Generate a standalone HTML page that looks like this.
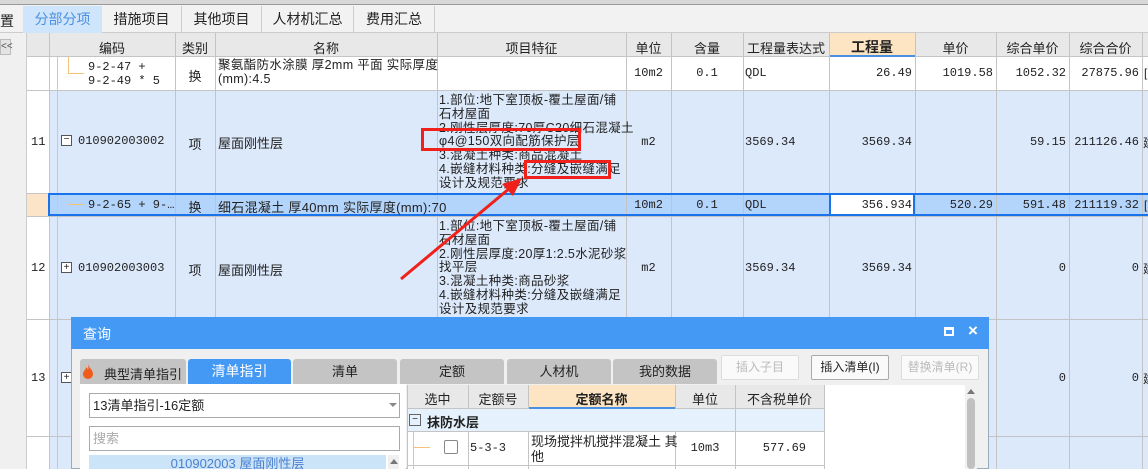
<!DOCTYPE html>
<html><head><meta charset="utf-8"><style>
*{margin:0;padding:0;box-sizing:border-box}
body{width:1148px;height:469px;overflow:hidden;position:relative;background:#fff;font-family:"Liberation Sans","Noto Sans CJK SC",sans-serif;font-size:12px;color:#222}
.a{position:absolute;white-space:nowrap}
.m{font-family:"Liberation Mono","Noto Sans CJK SC",monospace;font-size:12px}
.vl{position:absolute;width:1px;background:#c4c4c4}
.hl{position:absolute;height:1px;background:#c4c4c4}
.c{text-align:center}
.r{text-align:right}
.f{font-size:12.5px;line-height:13.8px;letter-spacing:0.35px}
</style></head><body>
<!-- top strip -->
<div class="a" style="left:0;top:0;width:1148px;height:5px;background:#d8d8d8;border-bottom:1px solid #999"></div>
<div class="a" style="left:0;top:5px;width:1148px;height:28px;background:#f2f2f2;border-bottom:1px solid #ccc"></div>
<div class="a" style="left:0;top:11px;font-size:14px">置</div>
<div class="a c" style="left:23px;top:6px;width:79px;height:27px;background:#cfe5fb;color:#4a90e2;font-size:14px;line-height:27px">分部分项</div>
<div class="a c" style="left:102px;top:6px;width:80px;height:27px;border-right:1px solid #ccc;font-size:14px;line-height:27px">措施项目</div>
<div class="a c" style="left:182px;top:6px;width:80px;height:27px;border-right:1px solid #ccc;font-size:14px;line-height:27px">其他项目</div>
<div class="a c" style="left:262px;top:6px;width:92px;height:27px;border-right:1px solid #ccc;font-size:14px;line-height:27px">人材机汇总</div>
<div class="a c" style="left:354px;top:6px;width:81px;height:27px;border-right:1px solid #ccc;font-size:14px;line-height:27px">费用汇总</div>
<!-- left gutter -->
<div class="a" style="left:0;top:33px;width:27px;height:436px;background:#f0f0f0;border-right:1px solid #ccc"></div>
<div class="a" style="left:0;top:39px;width:11px;height:16px;background:#e4e4e4;border:1px solid #bbb;font-size:10px;line-height:14px;color:#555">&lt;&lt;</div>
<!-- header -->
<div class="a" style="left:27px;top:33px;width:1121px;height:24px;background:#e8e8e8;border-bottom:1px solid #c4c4c4"></div>
<div class="a" style="left:829px;top:33px;width:86px;height:24px;background:#fde5c4;border-bottom:2px solid #4a90e2"></div>
<!-- row bgs -->
<div class="a" style="left:27px;top:57px;width:22px;height:412px;background:#fff"></div>
<div class="a" style="left:49px;top:90px;width:1099px;height:103px;background:#dce9fb"></div>
<div class="a" style="left:49px;top:216px;width:1099px;height:253px;background:#dce9fb"></div>
<div class="a" style="left:27px;top:193px;width:22px;height:23px;background:#fce4c8"></div>
<div class="a" style="left:49px;top:193px;width:1099px;height:23px;background:#b3d4fb"></div>
<div class="a" style="left:829px;top:194px;width:86px;height:21px;background:#fff"></div>
<!-- grid lines -->
<div class="vl" style="left:49px;top:33px;height:436px"></div>
<div class="vl" style="left:175px;top:33px;height:436px"></div>
<div class="vl" style="left:215px;top:33px;height:436px"></div>
<div class="vl" style="left:437px;top:33px;height:436px"></div>
<div class="vl" style="left:626px;top:33px;height:436px"></div>
<div class="vl" style="left:671px;top:33px;height:436px"></div>
<div class="vl" style="left:743px;top:33px;height:436px"></div>
<div class="vl" style="left:829px;top:33px;height:436px"></div>
<div class="vl" style="left:915px;top:33px;height:436px"></div>
<div class="vl" style="left:996px;top:33px;height:436px"></div>
<div class="vl" style="left:1069px;top:33px;height:436px"></div>
<div class="vl" style="left:1142px;top:33px;height:436px"></div>
<div class="hl" style="left:27px;top:90px;width:1121px"></div>
<div class="hl" style="left:27px;top:193px;width:1121px"></div>
<div class="hl" style="left:27px;top:216px;width:1121px"></div>
<div class="hl" style="left:27px;top:319px;width:1121px"></div>
<div class="hl" style="left:27px;top:436px;width:1121px"></div>
<!-- tree lines -->
<div class="a" style="left:57px;top:57px;width:1px;height:412px;background:#f5c27a"></div>
<div class="a" style="left:68px;top:57px;width:1px;height:16px;background:#f5c27a"></div>
<div class="a" style="left:68px;top:73px;width:16px;height:1px;background:#f5c27a"></div>
<div class="a" style="left:68px;top:204px;width:16px;height:1px;background:#f5c27a"></div>
<!-- header text -->
<div class="a c" style="left:49px;top:38px;width:126px;font-size:13px">编码</div>
<div class="a c" style="left:175px;top:38px;width:40px;font-size:13px">类别</div>
<div class="a c" style="left:215px;top:38px;width:222px;font-size:13px">名称</div>
<div class="a c" style="left:437px;top:38px;width:189px;font-size:13px">项目特征</div>
<div class="a c" style="left:626px;top:38px;width:45px;font-size:13px">单位</div>
<div class="a c" style="left:671px;top:38px;width:72px;font-size:13px">含量</div>
<div class="a c" style="left:743px;top:38px;width:86px;font-size:13px">工程量表达式</div>
<div class="a c" style="left:829px;top:37px;width:86px;font-size:14px;font-weight:bold">工程量</div>
<div class="a c" style="left:915px;top:38px;width:81px;font-size:13px">单价</div>
<div class="a c" style="left:996px;top:38px;width:73px;font-size:13px">综合单价</div>
<div class="a c" style="left:1069px;top:38px;width:73px;font-size:13px">综合合价</div>
<!-- row1 -->
<div class="a m" style="left:88px;top:60px;line-height:14px">9-2-47 +<br>9-2-49 * 5</div>
<div class="a c" style="left:175px;top:66px;width:40px;font-size:13px">换</div>
<div class="a f" style="left:218px;top:59px">聚氨酯防水涂膜 厚2mm 平面  实际厚度<br>(mm):4.5</div>
<div class="a m c" style="left:626px;top:66px;width:45px">10m2</div>
<div class="a m c" style="left:671px;top:66px;width:72px">0.1</div>
<div class="a m" style="left:745px;top:66px">QDL</div>
<div class="a m r" style="left:829px;top:66px;width:83px">26.49</div>
<div class="a m r" style="left:915px;top:66px;width:78px">1019.58</div>
<div class="a m r" style="left:996px;top:66px;width:70px">1052.32</div>
<div class="a m r" style="left:1069px;top:66px;width:70px">27875.96</div>
<div class="a" style="left:1144px;top:66px">[</div>
<!-- row11 -->
<div class="a m" style="left:31px;top:135px">11</div>
<div class="a" style="left:61px;top:135px;width:11px;height:11px;border:1px solid #555;background:#fff;font-size:10px;line-height:8px;text-align:center">−</div>
<div class="a m" style="left:78px;top:134px">010902003002</div>
<div class="a c" style="left:175px;top:134px;width:40px;font-size:13px">项</div>
<div class="a" style="left:218px;top:133px;font-size:13px">屋面刚性层</div>
<div class="a f" style="left:439px;top:94px">1.部位:地下室顶板-覆土屋面/铺<br>石材屋面<br>2.刚性层厚度:70厚C20细石混凝土<br>φ4@150双向配筋保护层<br>3.混凝土种类:商品混凝土<br>4.嵌缝材料种类:分缝及嵌缝满足<br>设计及规范要求</div>
<div class="a m c" style="left:626px;top:135px;width:45px">m2</div>
<div class="a m" style="left:745px;top:135px">3569.34</div>
<div class="a m r" style="left:829px;top:135px;width:83px">3569.34</div>
<div class="a m r" style="left:996px;top:135px;width:70px">59.15</div>
<div class="a m r" style="left:1069px;top:135px;width:70px">211126.46</div>
<div class="a" style="left:1143px;top:134px">建</div>
<!-- selected -->
<div class="a" style="left:48px;top:193px;width:1100px;height:23px;border:2px solid #1a73e8;border-right:none"></div>
<div class="a" style="left:829px;top:193px;width:86px;height:23px;border:2px solid #1a73e8"></div>
<div class="a m" style="left:88px;top:198px">9-2-65 + 9-…</div>
<div class="a c" style="left:175px;top:197px;width:40px;font-size:13px">换</div>
<div class="a" style="left:218px;top:197px;font-size:13px;letter-spacing:0.3px">细石混凝土 厚40mm  实际厚度(mm):70</div>
<div class="a m c" style="left:626px;top:198px;width:45px">10m2</div>
<div class="a m c" style="left:671px;top:198px;width:72px">0.1</div>
<div class="a m" style="left:745px;top:198px">QDL</div>
<div class="a m r" style="left:829px;top:198px;width:83px">356.934</div>
<div class="a m r" style="left:915px;top:198px;width:78px">520.29</div>
<div class="a m r" style="left:996px;top:198px;width:70px">591.48</div>
<div class="a m r" style="left:1069px;top:198px;width:70px">211119.32</div>
<div class="a" style="left:1144px;top:198px">[</div>
<!-- row12 -->
<div class="a m" style="left:31px;top:261px">12</div>
<div class="a" style="left:61px;top:262px;width:11px;height:11px;border:1px solid #555;background:#fff;font-size:10px;line-height:9px;text-align:center">+</div>
<div class="a m" style="left:78px;top:261px">010902003003</div>
<div class="a c" style="left:175px;top:260px;width:40px;font-size:13px">项</div>
<div class="a" style="left:218px;top:260px;font-size:13px">屋面刚性层</div>
<div class="a f" style="left:439px;top:220px">1.部位:地下室顶板-覆土屋面/铺<br>石材屋面<br>2.刚性层厚度:20厚1:2.5水泥砂浆<br>找平层<br>3.混凝土种类:商品砂浆<br>4.嵌缝材料种类:分缝及嵌缝满足<br>设计及规范要求</div>
<div class="a m c" style="left:626px;top:261px;width:45px">m2</div>
<div class="a m" style="left:745px;top:261px">3569.34</div>
<div class="a m r" style="left:829px;top:261px;width:83px">3569.34</div>
<div class="a m r" style="left:996px;top:261px;width:70px">0</div>
<div class="a m r" style="left:1069px;top:261px;width:70px">0</div>
<div class="a" style="left:1143px;top:260px">建</div>
<!-- row13 -->
<div class="a m" style="left:31px;top:371px">13</div>
<div class="a" style="left:61px;top:372px;width:11px;height:11px;border:1px solid #555;background:#fff;font-size:10px;line-height:9px;text-align:center">+</div>
<div class="a m r" style="left:996px;top:371px;width:70px">0</div>
<div class="a m r" style="left:1069px;top:371px;width:70px">0</div>
<div class="a" style="left:1143px;top:370px">建</div>
<!-- red annotations -->
<div class="a" style="left:421px;top:128px;width:160px;height:23px;border:3px solid #f0201a"></div>
<div class="a" style="left:524px;top:160px;width:87px;height:19px;border:3px solid #f0201a"></div>
<svg class="a" style="left:0;top:0" width="1148" height="469"><line x1="401" y1="279" x2="510" y2="188" stroke="#f0201a" stroke-width="3"/><polygon points="522,178 502,184 513,196" fill="#f0201a"/></svg>
<!-- dialog -->
<div class="a" style="left:71px;top:317px;width:918px;height:152px;background:#f0f0f0;border:1px solid #9ab"></div>
<div class="a" style="left:71px;top:317px;width:918px;height:32px;background:#4499f5"></div>
<div class="a" style="left:83px;top:324px;color:#fff;font-size:14px">查询</div>
<div class="a" style="left:944px;top:327px;width:10px;height:9px;border:2px solid #fff;border-top-width:3px"></div>
<div class="a" style="left:968px;top:321px;color:#fff;font-size:17px;font-weight:bold">×</div>
<div class="a" style="left:80px;top:359px;width:106px;height:25px;background:#c4c4c4;border-radius:3px 3px 0 0"></div>
<svg class="a" style="left:82px;top:363px" width="12" height="16"><path d="M6 1C7 5 11 7 11 11a5 5 0 0 1-10 0C1 8 4 7 4 4c1 1 2 2 2 3 1-2 0-4 0-6z" fill="#f05a1a"/></svg>
<div class="a" style="left:104px;top:364px;font-size:13px">典型清单指引</div>
<div class="a c" style="left:188px;top:359px;width:103px;height:25px;background:#4499f5;color:#fff;font-size:14px;line-height:25px;border-radius:3px 3px 0 0">清单指引</div>
<div class="a c" style="left:293px;top:359px;width:104px;height:25px;background:#c4c4c4;font-size:13px;line-height:25px;border-radius:3px 3px 0 0">清单</div>
<div class="a c" style="left:400px;top:359px;width:104px;height:25px;background:#c4c4c4;font-size:13px;line-height:25px;border-radius:3px 3px 0 0">定额</div>
<div class="a c" style="left:507px;top:359px;width:104px;height:25px;background:#c4c4c4;font-size:13px;line-height:25px;border-radius:3px 3px 0 0">人材机</div>
<div class="a c" style="left:613px;top:359px;width:104px;height:25px;background:#c4c4c4;font-size:13px;line-height:25px;border-radius:3px 3px 0 0">我的数据</div>
<div class="a c" style="left:721px;top:355px;width:78px;height:25px;background:#fafafa;border:1px solid #ddd;border-radius:2px;color:#bbb;line-height:23px">插入子目</div>
<div class="a c" style="left:811px;top:355px;width:78px;height:25px;background:#fafafa;border:1px solid #aaa;border-radius:2px;line-height:23px">插入清单(I)</div>
<div class="a c" style="left:901px;top:355px;width:78px;height:25px;background:#fafafa;border:1px solid #ddd;border-radius:2px;color:#bbb;line-height:23px">替换清单(R)</div>
<!-- left panel -->
<div class="a" style="left:80px;top:384px;width:326px;height:85px;background:#fff"></div>
<div class="a" style="left:89px;top:393px;width:311px;height:25px;border:1px solid #aaa;font-size:13px;line-height:23px;padding-left:3px">13清单指引-16定额</div>
<div class="a" style="left:389px;top:403px;width:0;height:0;border-left:4px solid transparent;border-right:4px solid transparent;border-top:4px solid #888"></div>
<div class="a" style="left:89px;top:426px;width:311px;height:25px;border:1px solid #aaa;font-size:13px;line-height:23px;padding-left:3px;color:#aaa">搜索</div>
<div class="a c" style="left:89px;top:455px;width:297px;height:14px;background:#cce4f7;color:#4a80d0;font-size:13px;line-height:18px">010902003  屋面刚性层</div>
<div class="a" style="left:388px;top:455px;width:11px;height:14px;background:#f0f0f0"></div>
<div class="a" style="left:390px;top:459px;width:0;height:0;border-left:4px solid transparent;border-right:4px solid transparent;border-bottom:5px solid #777"></div>
<!-- grid -->
<div class="a" style="left:407px;top:385px;width:570px;height:84px;background:#fff"></div>
<div class="a" style="left:407px;top:385px;width:417px;height:24px;background:#e8e8e8;border-bottom:1px solid #c4c4c4"></div>
<div class="a" style="left:528px;top:385px;width:147px;height:24px;background:#fde5c4;border-bottom:2px solid #4a90e2"></div>
<div class="a" style="left:407px;top:409px;width:417px;height:23px;background:#e5f2fd;border-bottom:1px solid #c4c4c4"></div>
<div class="vl" style="left:407px;top:385px;height:84px"></div>
<div class="vl" style="left:468px;top:385px;height:24px"></div>
<div class="vl" style="left:468px;top:432px;height:37px"></div>
<div class="vl" style="left:528px;top:385px;height:24px"></div>
<div class="vl" style="left:528px;top:432px;height:37px"></div>
<div class="vl" style="left:675px;top:385px;height:24px"></div>
<div class="vl" style="left:675px;top:432px;height:37px"></div>
<div class="vl" style="left:735px;top:385px;height:84px"></div>
<div class="vl" style="left:824px;top:385px;height:84px"></div>
<div class="hl" style="left:407px;top:465px;width:417px"></div>
<div class="a c" style="left:407px;top:389px;width:61px;font-size:13px">选中</div>
<div class="a c" style="left:468px;top:389px;width:60px;font-size:13px">定额号</div>
<div class="a c" style="left:528px;top:389px;width:147px;font-size:13px;font-weight:bold">定额名称</div>
<div class="a c" style="left:675px;top:389px;width:60px;font-size:13px">单位</div>
<div class="a c" style="left:735px;top:389px;width:89px;font-size:13px">不含税单价</div>
<div class="a" style="left:409px;top:414px;width:12px;height:12px;border:1px solid #666;font-size:10px;line-height:9px;text-align:center">−</div>
<div class="a" style="left:427px;top:412px;font-size:13px;font-weight:bold">抹防水层</div>
<div class="a" style="left:413px;top:432px;width:1px;height:37px;background:#f5c27a"></div>
<div class="a" style="left:413px;top:447px;width:17px;height:1px;background:#f5c27a"></div>
<div class="a" style="left:444px;top:440px;width:14px;height:14px;border:1px solid #888;border-radius:2px;background:#fff"></div>
<div class="a m" style="left:470px;top:441px">5-3-3</div>
<div class="a" style="left:531px;top:434px;font-size:13px;line-height:15px">现场搅拌机搅拌混凝土 其<br>他</div>
<div class="a m c" style="left:675px;top:441px;width:60px">10m3</div>
<div class="a m r" style="left:735px;top:441px;width:71px">577.69</div>
<div class="a" style="left:965px;top:385px;width:12px;height:84px;background:#f0f0f0"></div>
<div class="a" style="left:967px;top:389px;width:0;height:0;border-left:4px solid transparent;border-right:4px solid transparent;border-bottom:5px solid #777"></div>
<div class="a" style="left:967px;top:398px;width:8px;height:71px;background:#c0c0c0;border-radius:4px"></div>
</body></html>
